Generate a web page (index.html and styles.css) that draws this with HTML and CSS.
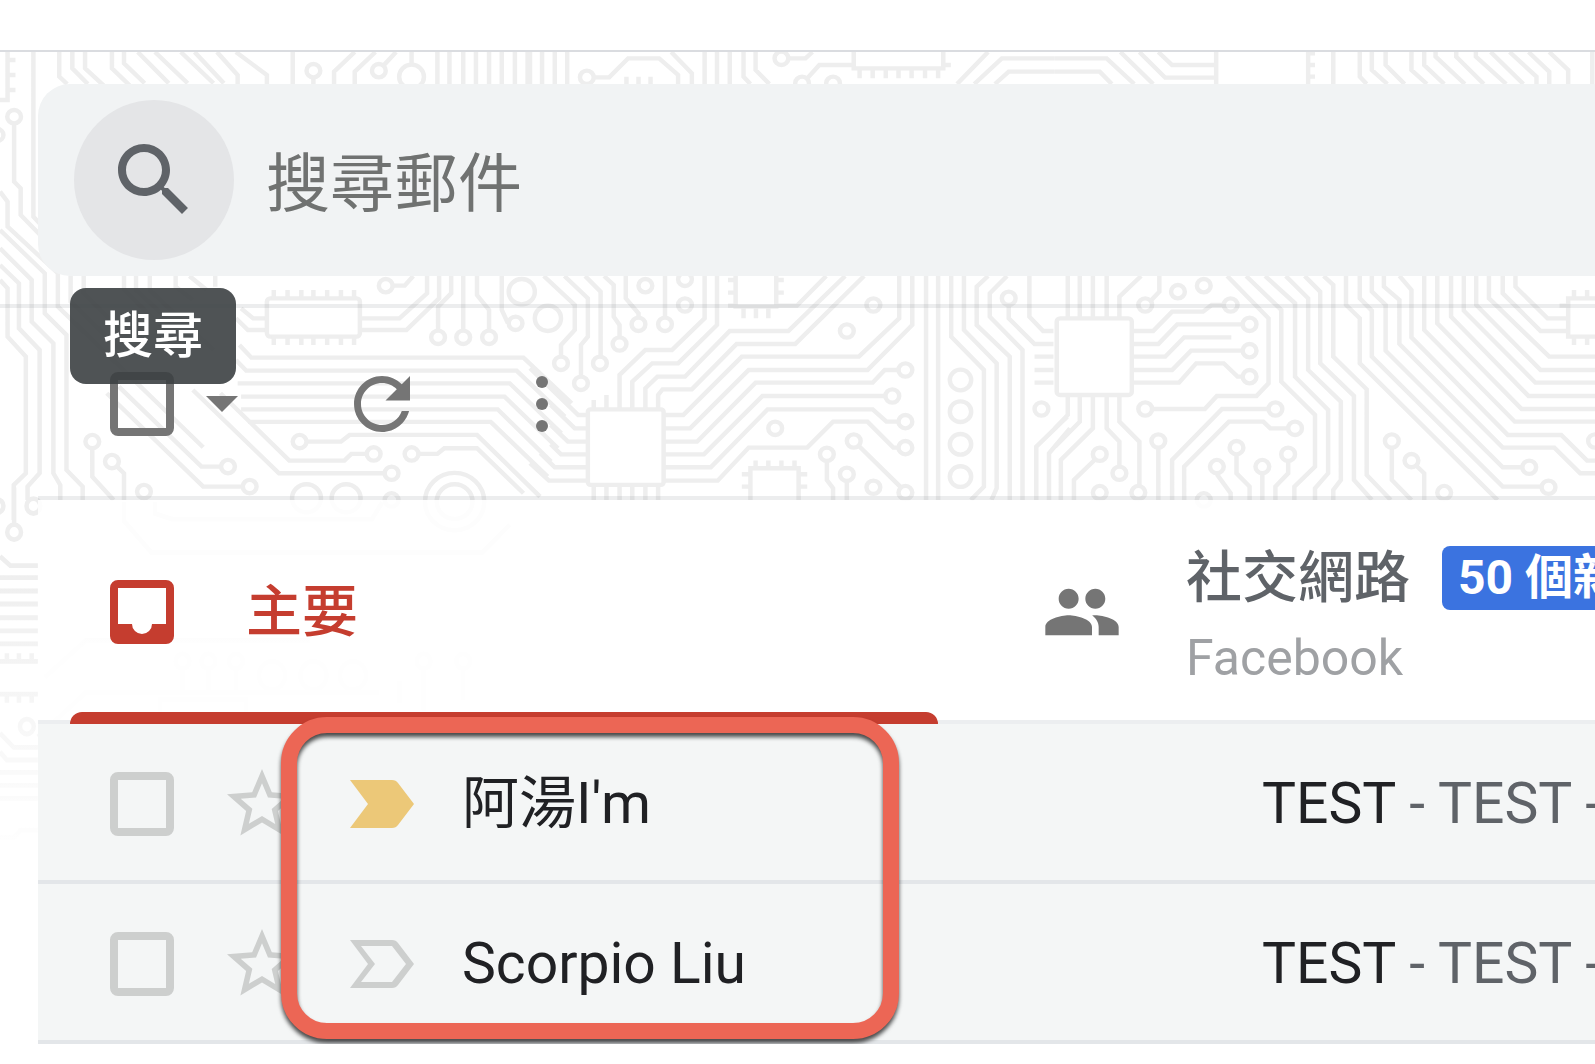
FILE: index.html
```html
<!DOCTYPE html>
<html lang="zh-Hant">
<head>
    <meta charset="UTF-8">
    <meta name="viewport" content="width=device-width, initial-scale=1.0">
    <title>Gmail</title>
    <link rel="stylesheet" href="styles.css">
</head>
<body>

    <div class="top-strip"></div>

    <div class="mail">

        <!-- Circuit board theme -->
        <svg class="theme" viewBox="0 0 1595 1012" aria-hidden="true">
            <defs>
                <linearGradient id="fade" x1="0" y1="0" x2="0" y2="1">
                    <stop offset="0" stop-color="#fff" stop-opacity="0"/>
                    <stop offset="1" stop-color="#fff"/>
                </linearGradient>
            </defs>
            <g transform="translate(0 -52)">
                <g transform="scale(.3444 .3333)">
                    <path d="M22 156V300H0M22 180H45M22 225H45M22 270H45M97 156V650L150 710M41 372V545L60 565V645L150 740"/>
                    <path d="M172 156V230L195 252M210 156V205L255 252M247 156V205L310 265M325 156V205L385 265M360 156V190L420 250M400 156L490 250M450 156L545 250M525 156L620 250M565 156L650 250M630 156L690 225V252M685 156L775 225V252M850 156V252M910 235V252M1030 156L970 215V252M1090 156L1030 215V252M1115 195L1150 156M1195 156V190M1270 156V252M1305 156V252M1345 156V252M1382 156V252M1420 156V252M1457 156V252M1495 156V252M1532 156V252"/>
                    <path d="M0 840L22 865V1010L75 1070V1420L40 1455V1560M0 795L55 850V985L115 1050V1420L80 1460V1500M0 745L92 840V965L155 1030V1420L175 1455V1500M0 690L130 820V940L193 1005V1410L240 1460V1500M0 575L22 605V680L168 820V920L590 1342"/>
                    <path d="M205 828V905L345 1045M243 828V880L380 1020M360 828V870L480 990M395 828V870L510 980M435 828V870L620 1050M510 828V860L560 900M550 828L600 870M625 828V860"/>
                    <path d="M775 955H735L700 925M775 990H720L685 955M695 1035L730 1073H1520L1660 1210M685 1080L715 1112H1500L1640 1250M690 1150H1480L1630 1300M700 1190H1465L1620 1345M700 1228H1445L1600 1385M720 1266H1425L1590 1430"/>
                    <path d="M892 1325H990L1015 1305H1385L1568 1490M1062 1362H1020L1000 1382H840L640 1180M1217 1362H1270L1290 1345H1385L1520 1480M1115 1420H810L560 1170M640 1400H585L345 1160M702 1460H590L310 1180M268 1347V1430L330 1500M340 1400L360 1420V1500"/>
                    <path d="M1140 857H1175L1200 828M1045 955H1160L1240 880V828M1045 990H1180L1275 895V828M1272 990V920L1310 880V828M1345 990V828M1420 990V930L1385 885V828M1475 970L1457 930V828"/>
                    <rect x="775" y="895" width="270" height="115" rx="10"/>
                    <path d="M795 870V895M835 870V895M875 870V895M910 870V895M950 870V895M990 870V895M1028 870V895M795 1010V1035M835 1010V1035M875 1010V1035M910 1010V1035M950 1010V1035M990 1010V1035M1028 1010V1035"/>
                    <circle cx="41" cy="350" r="20"/><circle cx="-8" cy="405" r="18"/><circle cx="910" cy="212" r="20"/><circle cx="1100" cy="212" r="20"/><circle cx="1195" cy="230" r="36"/>
                    <circle cx="1120" cy="857" r="20"/><circle cx="1272" cy="1012" r="20"/><circle cx="1345" cy="1012" r="20"/><circle cx="1420" cy="1012" r="20"/><circle cx="1497" cy="970" r="20"/><circle cx="1515" cy="875" r="38"/>
                    <circle cx="870" cy="1325" r="20"/><circle cx="1085" cy="1362" r="20"/><circle cx="1195" cy="1362" r="20"/><circle cx="1137" cy="1420" r="20"/><circle cx="662" cy="1400" r="20"/><circle cx="725" cy="1460" r="20"/><circle cx="268" cy="1325" r="20"/><circle cx="325" cy="1385" r="20"/><circle cx="418" cy="1475" r="20"/>
                    <circle cx="890" cy="1495" r="42"/><circle cx="1005" cy="1495" r="42"/><circle cx="1320" cy="1505" r="86"/><circle cx="1320" cy="1505" r="52"/><circle cx="1137" cy="1500" r="20"/>
                </g>
                <g transform="translate(530 40) scale(.3444 .3333)">
                    <path d="M0 36V132M35 36V132M72 36V132M108 36V132M187 112H230L285 55H375L430 105V132M410 36L470 100V132M280 110V132M315 110V132M350 110V132M507 36V132M543 36V132M580 36V132M620 36V110L640 132M655 36V90L695 132M750 55H800L820 36M940 36V85H1200V36M940 75H840L805 115M1200 75H1222M957 85V115M995 85V115M1033 85V115M1070 85V115M1108 85V115M1147 85V115M1185 85V115M1330 36L1240 132M1524 55H1370L1290 132M1524 95H1390L1350 132"/>
                    <path d="M40 708L130 795V870L90 915V950M100 708L168 775V890L148 915V1010M160 708L205 755V950M215 708L243 735V830L260 855V890M278 708V775L315 820V832M392 708V832"/>
                    <path d="M597 708V800H715V708M575 720H597M575 758H597M575 797H597M715 720H737M715 758H737M620 800V835M656 800V835M692 800V835M715 797H775L860 708"/>
                    <path d="M507 708V835L412 930H335L260 1005V1105M543 708V855L430 970H355L297 1025V1105M915 708L750 873H580L450 1010H370L335 1045V1105M970 708L770 912H600L470 1048H385L372 1065V1105M1072 708V835L955 950H615L445 1125H390M1110 708V855L980 990H635L465 1165H390"/>
                    <path d="M1068 990H1030L995 1028H655L485 1205H390M1030 1068H675L505 1243H390M1068 1145H1035L995 1108H690L525 1282H390M1068 1223H1055L980 1145H880L805 1223H635L545 1322H390"/>
                    <rect x="168" y="1108" width="220" height="227" rx="8"/>
                    <path d="M168 1125H140L0 985M168 1165H130L60 1095M168 1205H110L60 1155M168 1243H90L60 1213M168 1282H72L30 1240M168 1322H55L0 1270M185 1080V1108M222 1065V1108M185 1335V1380M222 1335V1380M260 1335V1380M297 1335V1380M335 1335V1380M372 1335V1380"/>
                    <path d="M862 1265V1320L880 1345V1380M920 1325V1380M955 1218L1075 1340M640 1380V1285H780V1380M655 1262V1285M692 1262V1285M730 1262V1285M768 1262V1285M615 1303H640M615 1340H640M780 1303H805M780 1340H805"/>
                    <path d="M1150 708V1380M1185 708V1380M1223 708V890L1318 990V1340L1280 1380M1260 708V870L1355 970V1345L1340 1380M1330 708L1297 740V855L1393 950V1380M1385 708L1335 760V830L1430 930V1380M1390 797V835L1465 912H1520M1450 708V830L1490 873H1520M1465 950H1520M1465 990H1520M1465 1028H1520M1560 1130L1470 1220V1380M1568 1165L1507 1240V1380"/>
                    <circle cx="165" cy="112" r="20"/><circle cx="730" cy="55" r="20"/><circle cx="790" cy="130" r="20"/><circle cx="880" cy="130" r="20"/>
                    <circle cx="52" cy="835" r="38"/><circle cx="90" cy="970" r="20"/><circle cx="148" cy="1030" r="20"/><circle cx="203" cy="970" r="20"/><circle cx="260" cy="912" r="20"/><circle cx="315" cy="853" r="20"/><circle cx="335" cy="737" r="20"/><circle cx="392" cy="853" r="20"/><circle cx="450" cy="718" r="20"/><circle cx="450" cy="795" r="20"/>
                    <circle cx="1090" cy="990" r="20"/><circle cx="1052" cy="1068" r="20"/><circle cx="1090" cy="1145" r="20"/><circle cx="1090" cy="1223" r="20"/><circle cx="712" cy="1165" r="20"/><circle cx="997" cy="795" r="20"/><circle cx="920" cy="873" r="20"/><circle cx="862" cy="1243" r="20"/><circle cx="920" cy="1303" r="20"/><circle cx="940" cy="1203" r="20"/><circle cx="1090" cy="1358" r="20"/><circle cx="997" cy="1342" r="20"/>
                    <circle cx="1250" cy="1020" r="31"/><circle cx="1250" cy="1115" r="31"/><circle cx="1250" cy="1213" r="31"/><circle cx="1250" cy="1310" r="31"/><circle cx="1390" cy="775" r="20"/><circle cx="1485" cy="1107" r="20"/>
                </g>
                <g transform="translate(1055 40) scale(.3444 .3333)">
                    <path d="M0 55H150L230 132M0 95H130L165 132M190 36L285 132M245 36L320 113H468M300 36L340 75H468M468 36V132M735 36V132M735 40H755M735 75H755M735 110H755M808 36V132M885 36V110L905 132M920 36V90L965 132M960 36V75L1015 132M1035 36V90L1080 132M1072 36V75L1130 132M1105 36V50L1190 132M1165 36V50L1245 132M1222 36V50L1310 132M1265 36L1360 132M1320 36L1398 110V132M1375 36L1435 95V132M1435 36L1490 90V132M1560 36V132"/>
                    <path d="M37 708V835M72 708V835M110 708V835M150 708V835M250 708L187 770V835M303 708V755L280 780M488 795H455L430 815H340L285 873H225M543 853H355L300 912H225M512 892H375L320 950H225M543 932H395L340 990H225M543 1010H530L490 970H410L360 1028H225M285 1107H435L470 1068H585L620 1030V835L500 708"/>
                    <rect x="5" y="835" width="218" height="230" rx="10"/>
                    <path d="M555 708L657 810V1025L755 1125V1280L695 1340V1380M610 708L697 790V1010L793 1110V1300L755 1345V1380M670 708L735 775V990L830 1085V1320L808 1350V1380M725 708L770 755V970L868 1068V1320L920 1380M780 708L808 735V950L905 1048V1305L975 1380"/>
                    <path d="M845 708V795L885 835V970L1285 1380M885 708V775L920 812V950L1300 1340H1410M920 708V755L960 795V932L1300 1282H1355M955 708V740L1000 780V912L1300 1223H1450L1525 1300H1568M1000 708L1035 750V892L1315 1185H1470L1545 1262H1568M1072 708V870L1335 1145H1568M1110 708V850L1355 1107H1568M1150 708V830L1375 1068H1568M1187 708V812L1395 1028H1568M1223 708V795L1410 990H1568M1260 708V775L1435 950H1568M1300 708V760L1410 873H1485M1337 708V740L1430 835H1485"/>
                    <path d="M1568 775H1490V890H1568M1507 750V775M1545 750V775M1507 890V915M1545 890V915M1465 797H1490"/>
                    <path d="M37 1065V1125L0 1165M72 1065V1145L0 1220M110 1065V1165L17 1260V1380M150 1065V1165L187 1205V1280M187 1065V1145L245 1205V1335M115 1260L55 1320V1380M300 1225V1380M617 1107H485L340 1260V1380M675 1165H625L605 1145H505L375 1280V1380M470 1303L510 1360V1380M527 1245V1300L565 1340V1380M602 1303V1380M677 1265V1300L640 1340V1380M978 1225V1320L1035 1380M1050 1278L1072 1300V1380"/>
                    <circle cx="262" cy="795" r="20"/><circle cx="357" cy="755" r="20"/><circle cx="432" cy="737" r="20"/><circle cx="510" cy="795" r="20"/><circle cx="565" cy="853" r="20"/><circle cx="565" cy="932" r="20"/><circle cx="565" cy="1010" r="20"/><circle cx="262" cy="1107" r="20"/><circle cx="1433" cy="1342" r="20"/><circle cx="1377" cy="1282" r="20"/>
                    <circle cx="187" cy="1300" r="20"/><circle cx="242" cy="1358" r="20"/><circle cx="130" cy="1243" r="20"/><circle cx="130" cy="1358" r="20"/><circle cx="300" cy="1203" r="20"/><circle cx="640" cy="1107" r="20"/><circle cx="697" cy="1165" r="20"/><circle cx="470" cy="1280" r="20"/><circle cx="527" cy="1223" r="20"/><circle cx="602" cy="1280" r="20"/><circle cx="677" cy="1243" r="20"/><circle cx="432" cy="1380" r="20"/><circle cx="978" cy="1203" r="20"/><circle cx="1035" cy="1262" r="20"/><circle cx="1130" cy="1358" r="20"/><circle cx="1568" cy="1203" r="20"/>
                </g>
                <g transform="translate(0 480) scale(.3444 .3724)">
                    <path d="M41 118V20M0 205L30 230H110M0 262H110M0 298H110M0 333H110M0 370H110M0 405H110M0 440H110M0 487H110M20 465V487M55 465V487M92 465V487M0 575H110M20 575V598M55 575V598M92 575V598M0 680L40 718H110M0 730L20 752H110M0 785H110M0 820H110M0 855H110M0 960H40L60 940H110"/>
                    <path d="M360 60V110L440 195H1400L1480 120M450 60V90L500 105H1080L1110 60M130 530L250 430H900M530 510V570M605 510V570M685 510V570M110 690L250 570H1100M465 750V590H715V750M1160 540V600M1230 510V620M1345 510V590M720 700H1200L1250 745"/>
                    <circle cx="41" cy="140" r="20"/><circle cx="97" cy="70" r="20"/><circle cx="-8" cy="70" r="18"/><circle cx="78" cy="662" r="20"/>
                    <circle cx="530" cy="487" r="20"/><circle cx="605" cy="487" r="20"/><circle cx="685" cy="487" r="20"/><circle cx="790" cy="525" r="38"/><circle cx="910" cy="525" r="38"/><circle cx="1025" cy="525" r="38"/><circle cx="1230" cy="487" r="20"/><circle cx="1345" cy="487" r="20"/>
                </g>
                <rect class="theme-fade" x="0" y="560" width="1595" height="300"/>
            </g>
        </svg>

        <header class="header">
            <form class="search">
                <button class="search-button" type="button" aria-label="搜尋" aria-describedby="search-tip">
                    <svg class="search-icon" viewBox="0 0 24 24"><path d="M15.5 14h-.79l-.28-.27C15.41 12.59 16 11.11 16 9.5 16 5.91 13.09 3 9.5 3S3 5.91 3 9.5 5.91 16 9.5 16c1.61 0 3.09-.59 4.23-1.57l.27.28v.79l5 4.99L20.49 19l-4.99-5zm-6 0C7.01 14 5 11.99 5 9.5S7.01 5 9.5 5 14 7.01 14 9.5 11.99 14 9.5 14z"/></svg>
                </button>
                <input class="search-input" type="text" placeholder="搜尋郵件" aria-label="搜尋郵件">
            </form>
            <div class="tooltip" id="search-tip" role="tooltip">搜尋</div>
        </header>

        <div class="toolbar">
            <input class="check check-dark" type="checkbox" aria-label="選取">
            <button class="icon-button select-menu" type="button" aria-label="選取選單">
                <svg width="32" height="16" viewBox="0 0 32 16"><path d="M0 0h32L16 16z"/></svg>
            </button>
            <button class="icon-button refresh" type="button" aria-label="重新整理">
                <svg width="56" height="56" viewBox="4 4 16 16"><path d="M17.65 6.35C16.2 4.9 14.21 4 12 4c-4.42 0-7.99 3.58-7.99 8s3.57 8 7.99 8c3.73 0 6.84-2.55 7.73-6h-2.08c-.82 2.33-3.04 4-5.65 4-3.31 0-6-2.69-6-6s2.69-6 6-6c1.66 0 3.14.69 4.22 1.78L13 11h7V4l-2.35 2.35z"/></svg>
            </button>
            <button class="icon-button more" type="button" aria-label="更多">
                <svg width="12" height="56" viewBox="0 0 12 56"><circle cx="6" cy="6" r="6"/><circle cx="6" cy="28" r="6"/><circle cx="6" cy="50" r="6"/></svg>
            </button>
        </div>

        <nav class="tabs">
            <a class="tab tab-active" href="#primary">
                <svg class="inbox-icon" viewBox="0 0 64 64"><path fill-rule="evenodd" d="M8 0h48a8 8 0 0 1 8 8v48a8 8 0 0 1-8 8H8a8 8 0 0 1-8-8V8a8 8 0 0 1 8-8zM8 8v36h14a10 10 0 0 0 20 0h14V8z"/></svg>
                <span class="tab-title">主要</span>
            </a>
            <a class="tab" href="#social">
                <svg class="people-icon" viewBox="0 0 24 24"><path d="M16 11c1.66 0 2.99-1.34 2.99-3S17.66 5 16 5s-3 1.34-3 3 1.34 3 3 3zm-8 0c1.66 0 2.99-1.34 2.99-3S9.66 5 8 5 5 6.34 5 8s1.34 3 3 3zm0 2c-2.33 0-7 1.17-7 3.5V19h14v-2.5c0-2.33-4.67-3.5-7-3.5zm8 0c-.29 0-.62.02-.97.05 1.16.84 1.97 1.97 1.97 3.45V19h6v-2.5c0-2.33-4.67-3.5-7-3.5z"/></svg>
                <span class="tab-text">
                    <span class="tab-head">
                        <span class="tab-title">社交網路</span>
                        <span class="badge">50 個新</span>
                    </span>
                    <span class="tab-sender">Facebook</span>
                </span>
            </a>
        </nav>

        <div class="list">
            <table class="mails">
                <colgroup>
                    <col class="col-check">
                    <col class="col-star">
                    <col class="col-mark">
                    <col class="col-name">
                    <col>
                </colgroup>
                <tr>
                    <td class="cell-check"><input class="check" type="checkbox" aria-label="阿湯I'm"></td>
                    <td>
                        <button class="icon-button" type="button" aria-label="加星號">
                            <svg class="star" viewBox="2 2 20 20"><path d="M22 9.24l-7.19-.62L12 2 9.19 8.63 2 9.24l5.46 4.73L5.82 21 12 17.27 18.18 21l-1.63-7.03L22 9.24zM12 15.4l-3.76 2.27 1-4.28-3.32-2.88 4.38-.38L12 6.1l1.71 4.04 4.38.38-3.32 2.88 1 4.28L12 15.4z"/></svg>
                        </button>
                    </td>
                    <td>
                        <button class="icon-button" type="button" aria-label="重要">
                            <svg class="mark mark-on" viewBox="0 0 64 48"><path d="M0 0h42q4 0 6 3l16 21-16 21q-2 3-6 3H0l18-24z"/></svg>
                        </button>
                    </td>
                    <td class="name">阿湯I'm</td>
                    <td class="subject">TEST <span class="snippet">- TEST -</span></td>
                </tr>
                <tr>
                    <td class="cell-check"><input class="check" type="checkbox" aria-label="Scorpio Liu"></td>
                    <td>
                        <button class="icon-button" type="button" aria-label="加星號">
                            <svg class="star" viewBox="2 2 20 20"><path d="M22 9.24l-7.19-.62L12 2 9.19 8.63 2 9.24l5.46 4.73L5.82 21 12 17.27 18.18 21l-1.63-7.03L22 9.24zM12 15.4l-3.76 2.27 1-4.28-3.32-2.88 4.38-.38L12 6.1l1.71 4.04 4.38.38-3.32 2.88 1 4.28L12 15.4z"/></svg>
                        </button>
                    </td>
                    <td>
                        <button class="icon-button" type="button" aria-label="不重要">
                            <svg class="mark" viewBox="0 0 64 48"><path fill-rule="evenodd" d="M0 0h42q4 0 6 3l16 21-16 21q-2 3-6 3H0l18-24zM11 6l14 18-14 18h31l14-18L42 6z"/></svg>
                        </button>
                    </td>
                    <td class="name">Scorpio Liu</td>
                    <td class="subject">TEST <span class="snippet">- TEST -</span></td>
                </tr>
            </table>
            <!-- Red marker box round the senders -->
            <div class="highlight"></div>
        </div>
    </div>

</body>
</html>
```

FILE: styles.css
```css
* {
    box-sizing: border-box;
}
body {
    margin: 0;
    background: #fff;
    color: #202124;
    font-family: Roboto, "Noto Sans CJK TC", sans-serif;
    font-size: 56px;
    min-height: 100vh;
    overflow: hidden;
}
.top-strip {
    height: 52px;
    border-bottom: 2px solid #dadce0;
}
.mail {
    position: relative;
    overflow: hidden;
}
svg {
    display: block;
    fill: currentColor;
    flex: none;
}
/* Theme drawing behind the mail */
.theme {
    position: absolute;
    top: 0;
    left: 0;
    width: 1595px;
    z-index: -1;
    fill: none;
    stroke: #eee;
    stroke-width: 13;
}
.theme g g {
    filter: blur(2px);
}
.theme rect {
    fill: #fff;
}
.theme .theme-fade {
    fill: url(#fade);
    stroke: none;
}
.header {
    position: relative;
    padding: 32px 0 32px 38px;
    box-shadow: inset 0 -4px rgba(100, 105, 115, 0.12);
}
.search {
    display: flex;
    align-items: center;
    gap: 32px;
    height: 192px;
    padding-left: 36px;
    border-radius: 32px 0 0 32px;
    background: #f1f3f4;
}
.search-button {
    display: flex;
    align-items: center;
    justify-content: center;
    flex: none;
    width: 160px;
    height: 160px;
    padding: 0;
    border: none;
    border-radius: 50%;
    background: #e4e5e7;
    color: #5f6368;
}
.search-icon {
    width: 96px;
    height: 96px;
}
.search-input {
    flex: 1;
    min-width: 0;
    padding: 8px 0 0;
    border: none;
    outline: none;
    background: none;
    font-family: inherit;
    font-size: 64px;
}
.search-input::placeholder {
    color: #707271;
    opacity: 1;
}
.tooltip {
    position: absolute;
    top: 236px;
    left: 70px;
    z-index: 2;
    width: 166px;
    border-radius: 16px;
    background: rgba(60, 64, 67, 0.9);
    color: #fff;
    font-size: 50px;
    font-weight: 500;
    line-height: 96px;
    text-align: center;
}
.toolbar {
    display: flex;
    align-items: center;
    height: 192px;
    margin-left: 38px;
    padding-left: 72px;
    color: #757575;
    box-shadow: inset 0 -4px rgba(100, 105, 115, 0.12);
}
.icon-button {
    display: block;
    padding: 0;
    border: none;
    background: none;
    color: inherit;
}
.select-menu {
    margin-left: 32px;
}
.refresh {
    margin-left: 116px;
}
.more {
    margin-left: 126px;
}
.check {
    appearance: none;
    display: block;
    width: 64px;
    height: 64px;
    margin: 0;
    border: 8px solid #cdcfce;
    border-radius: 8px;
}
.check-dark {
    border-color: #757575;
}
.tabs {
    display: flex;
    height: 224px;
    margin-left: 38px;
    overflow: hidden;
    background: rgba(255, 255, 255, 0.85);
    box-shadow: inset 0 -4px #eceef0;
}
.tab {
    position: relative;
    display: flex;
    align-items: center;
    gap: 64px;
    flex: 0 1 932px;
    padding-left: 72px;
    color: #5f6368;
    text-decoration: none;
}
.tab-active {
    flex-shrink: 0;
    gap: 72px;
    color: #c53d2f;
}
.tab-active::after {
    content: "";
    position: absolute;
    left: 32px;
    right: 32px;
    bottom: 0;
    height: 12px;
    border-radius: 12px 12px 0 0;
    background: #c53d2f;
}
.tab-title {
    font-weight: 500;
    line-height: 72px;
    white-space: nowrap;
}
.inbox-icon {
    width: 64px;
    height: 64px;
}
.people-icon {
    width: 80px;
    height: 80px;
    color: #757575;
}
.tab-text {
    display: flex;
    flex-direction: column;
    gap: 16px;
    padding-top: 4px;
}
.tab-head {
    display: flex;
    align-items: center;
    gap: 32px;
}
.badge {
    padding: 0 16px;
    border-radius: 8px;
    background: #3b73e0;
    color: #fff;
    font-size: 48px;
    font-weight: 700;
    line-height: 64px;
    white-space: nowrap;
}
.tab-sender {
    color: #9fa1a4;
    font-size: 50px;
    line-height: 56px;
}
.list {
    position: relative;
    margin-left: 38px;
}
.mails {
    width: 100%;
    table-layout: fixed;
    border-collapse: collapse;
    color: #cdcfce;
    font-size: 57px;
    line-height: 64px;
}
.mails td {
    height: 160px;
    padding: 0;
    overflow: hidden;
    background: rgba(243, 245, 245, 0.9);
    box-shadow: inset 0 -4px #e3e6e9;
    white-space: nowrap;
}
.col-check {
    width: 189px;
}
.col-star {
    width: 123px;
}
.col-mark {
    width: 112px;
}
.col-name {
    width: 800px;
}
.mails .cell-check {
    padding-left: 72px;
}
.star {
    width: 70px;
    height: 70px;
}
.mark {
    width: 64px;
    height: 48px;
}
.mark-on {
    color: #ecc878;
}
.mails .name,
.mails .subject {
    color: #202124;
}
.mails .snippet {
    color: #5f6368;
}
.highlight {
    position: absolute;
    top: -7px;
    left: 243px;
    width: 618px;
    height: 322px;
    border: 16px solid #ec6655;
    border-radius: 46px;
    filter: drop-shadow(0 4px 2px rgba(0, 0, 0, 0.7));
    pointer-events: none;
}
```
